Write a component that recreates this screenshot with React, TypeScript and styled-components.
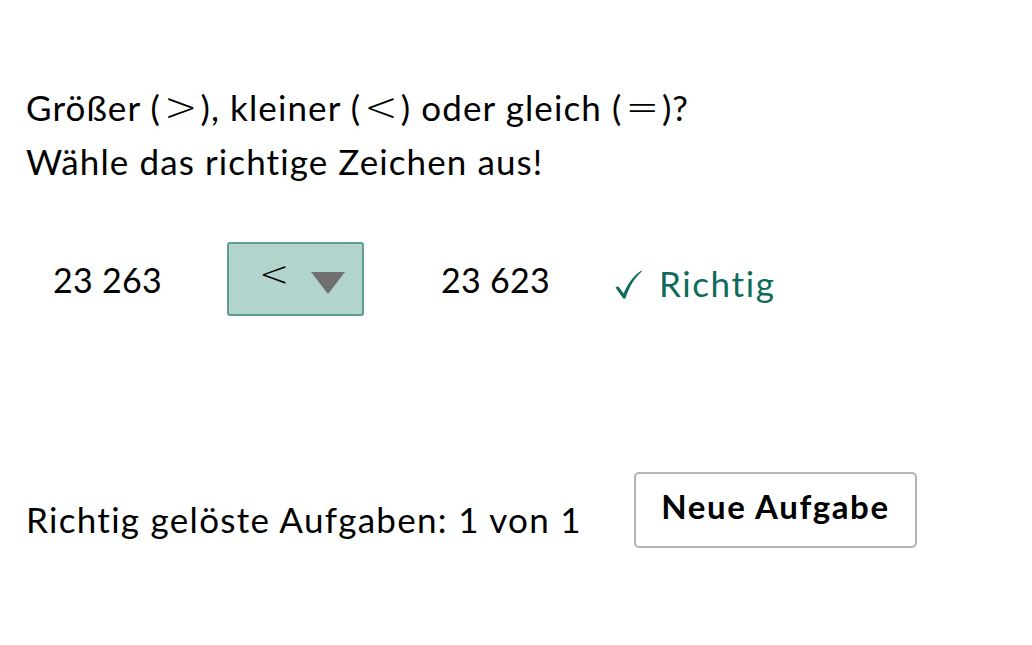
import React from 'react'
import styled, { createGlobalStyle } from 'styled-components'

const GlobalStyle = createGlobalStyle`
    html, body {
        margin: 0;
        padding: 0;
        background: #ffffff;
    }
    body {
        font-family: Lato, 'DejaVu Sans', sans-serif;
        color: #000000;
    }
`

const Page = styled.div`
    display: flex;
    flex-direction: column;
    padding: 80px 0 0 26px;
`

const Prompt = styled.div`
    font-size: 35px;
    line-height: 54px;
    letter-spacing: 1.1px;
`

const Rel = styled.span`
    font-family: 'DejaVu Sans', sans-serif;
    font-weight: 200;
    font-size: 40px;
    line-height: 1;
    letter-spacing: 0;
    margin: 0 3px;
`

const TaskRow = styled.div`
    display: flex;
    align-items: center;
    margin-top: 54px;
    height: 74px;
`

const Number = styled.div<{ $width: number }>`
    font-size: 34px;
    width: ${p => p.$width}px;
    padding-left: 27px;
    box-sizing: border-box;
    letter-spacing: 0.3px;
`

const Select = styled.div`
    width: 137px;
    height: 74px;
    box-sizing: border-box;
    background: #b3d3cd;
    border: 2px solid #5e9e92;
    border-radius: 3px;
    display: flex;
    align-items: center;
    padding-left: 30px;
    margin-right: 50px;
`

const Symbol = styled.span`
    font-family: 'DejaVu Sans', sans-serif;
    font-weight: 200;
    font-size: 36px;
    line-height: 1;
    margin-top: -10px;
`

const Arrow = styled.svg`
    margin-left: 22px;
    width: 34px;
    height: 22px;
    margin-top: 8px;
`

const Feedback = styled.div`
    font-size: 35px;
    letter-spacing: 1.6px;
    color: #0e6b5b;
    margin-top: 8px;
    margin-left: 13px;
    display: flex;
    align-items: center;
    gap: 17px;
`

const Check = styled.svg`
    width: 27px;
    height: 29px;
    margin-top: 2px;
`

const ScoreRow = styled.div`
    display: flex;
    align-items: flex-start;
    margin-top: 156px;
`

const Score = styled.div`
    font-size: 35px;
    letter-spacing: 1.3px;
    margin-top: 26px;
    width: 608px;
`

const NewButton = styled.button`
    font-family: Lato, 'DejaVu Sans', sans-serif;
    font-weight: 700;
    font-size: 33px;
    letter-spacing: 1.6px;
    height: 76px;
    width: 283px;
    background: #ffffff;
    border: 2px solid #b4b4b4;
    border-radius: 5px;
    color: #000000;
    padding: 0 0 8px;
`

export default function App() {
    return (
        <>
            <GlobalStyle />
            <Page>
                <Prompt>
                    Größer (<Rel>&gt;</Rel>), kleiner (<Rel>&lt;</Rel>) oder gleich (<Rel>=</Rel>)?
                    <br />
                    Wähle das richtige Zeichen aus!
                </Prompt>
                <TaskRow>
                    <Number $width={201}>23 263</Number>
                    <Select>
                        <Symbol>&lt;</Symbol>
                        <Arrow viewBox='0 0 34 22'>
                            <polygon points='0,0 34,0 17,22' fill='#707070' />
                        </Arrow>
                    </Select>
                    <Number $width={188}>23 623</Number>
                    <Feedback>
                        <Check viewBox='0 0 27 29'>
                            <path
                                d='M0.5 17.5 L3.2 16.2 L8.6 23.6 C12.6 13.8 18.6 5.6 26.5 0.6 L26.8 1.4 C19.8 7.6 14.2 16.4 10.4 28.6 L8.2 28.6 Z'
                                fill='#0e6b5b'
                            />
                        </Check>
                        Richtig
                    </Feedback>
                </TaskRow>
                <ScoreRow>
                    <Score>Richtig gelöste Aufgaben: 1 von 1</Score>
                    <NewButton>Neue Aufgabe</NewButton>
                </ScoreRow>
            </Page>
        </>
    )
}
